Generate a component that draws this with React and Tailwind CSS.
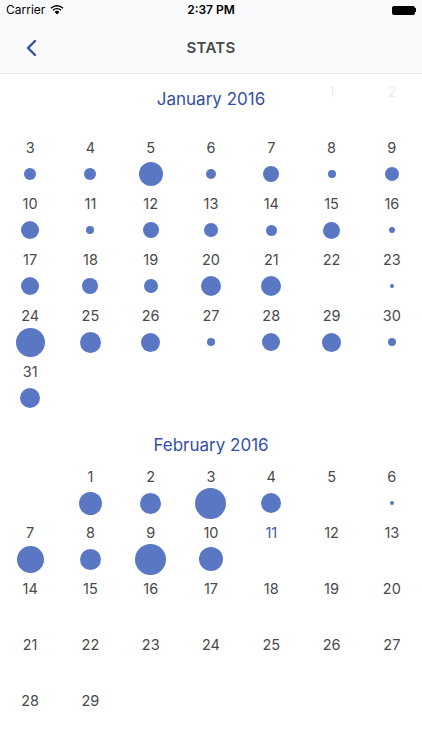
import React from "react";

const jan = [
  [null, null, null, null, null, [1, 0], [2, 0]],
  [[3, 12], [4, 12], [5, 24], [6, 10], [7, 16], [8, 8], [9, 14]],
  [[10, 18], [11, 8], [12, 16], [13, 14], [14, 11], [15, 17], [16, 6]],
  [[17, 18], [18, 16], [19, 14], [20, 20], [21, 20], [22, 0], [23, 4]],
  [[24, 29], [25, 21], [26, 19], [27, 8], [28, 18], [29, 19], [30, 8]],
  [[31, 20], null, null, null, null, null, null],
];

const feb = [
  [null, [1, 23], [2, 21], [3, 31], [4, 20], [5, 0], [6, 4]],
  [[7, 27], [8, 21], [9, 31], [10, 24], [11, 0, true], [12, 0], [13, 0]],
  [[14, 0], [15, 0], [16, 0], [17, 0], [18, 0], [19, 0], [20, 0]],
  [[21, 0], [22, 0], [23, 0], [24, 0], [25, 0], [26, 0], [27, 0]],
  [[28, 0], [29, 0], null, null, null, null, null],
];

function Week({ days }) {
  return (
    <div className="grid grid-cols-7 h-[56px]">
      {days.map((d, i) => (
        <div key={i} className="flex flex-col items-center">
          {d && (
            <>
              <div
                className={
                  "h-5 leading-5 text-[14.5px] " +
                  (d[2] ? "text-[#3d59a9]" : "text-[#4a4a4a]")
                }
              >
                {d[0]}
              </div>
              <div className="h-8 flex items-center justify-center">
                {d[1] > 0 && (
                  <div
                    className="rounded-full bg-[#5a77c4]"
                    style={{ width: d[1], height: d[1] }}
                  />
                )}
              </div>
            </>
          )}
        </div>
      ))}
    </div>
  );
}

export default function App() {
  return (
    <div
      className="w-[422px] h-[750px] overflow-hidden bg-white"
      style={{ fontFamily: "Inter, 'Liberation Sans', sans-serif" }}
    >
      {/* status + nav */}
      <div className="bg-[#f9fafc] border-b border-[#e4e6ea]">
        <div className="h-5 flex items-center justify-between px-[6px] text-[12px] text-black relative">
          <div className="flex items-center gap-[5px]">
            <span>Carrier</span>
            <svg width="14" height="10" viewBox="0 0 14 10">
              <path d="M7 9.5 L4.6 7 A3.4 3.4 0 0 1 9.4 7 Z" fill="#000" />
              <path d="M2.9 5.3 A5.8 5.8 0 0 1 11.1 5.3" stroke="#000" strokeWidth="1.4" fill="none" />
              <path d="M1 3.3 A8.5 8.5 0 0 1 13 3.3" stroke="#000" strokeWidth="1.4" fill="none" />
            </svg>
          </div>
          <span className="absolute left-1/2 -translate-x-1/2 font-semibold">2:37 PM</span>
          <div className="flex items-center">
            <div className="w-[23px] h-[9px] bg-black rounded-[2px]" />
            <div className="w-[1.5px] h-[4px] bg-black" />
          </div>
        </div>
        <div className="h-[53px] flex items-center relative pt-[3px]">
          <svg className="ml-[25px]" width="12" height="18" viewBox="0 0 12 18">
            <path d="M10 2 L3 9 L10 16" stroke="#3451a3" strokeWidth="2.4" fill="none" strokeLinecap="round" strokeLinejoin="round" />
          </svg>
          <span className="absolute left-1/2 -translate-x-1/2 text-[15px] font-semibold tracking-[0.3px] text-[#4a4a4a]">
            STATS
          </span>
        </div>
      </div>

      {/* content */}
      <div className="relative">
        <div className="pt-[8px]">
          {jan.map((w, i) => (
            <Week key={i} days={w} />
          ))}
        </div>
        <div className="absolute top-0 left-0 right-0 h-[50px] bg-white/90 flex items-center justify-center pt-[1px]">
          <span className="text-[17px] text-[#3450a3]">January 2016</span>
        </div>
        <div className="h-[49px] flex items-center justify-center pt-[6px]">
          <span className="text-[17px] text-[#3450a3]">February 2016</span>
        </div>
        {feb.map((w, i) => (
          <Week key={i} days={w} />
        ))}
      </div>
    </div>
  );
}
